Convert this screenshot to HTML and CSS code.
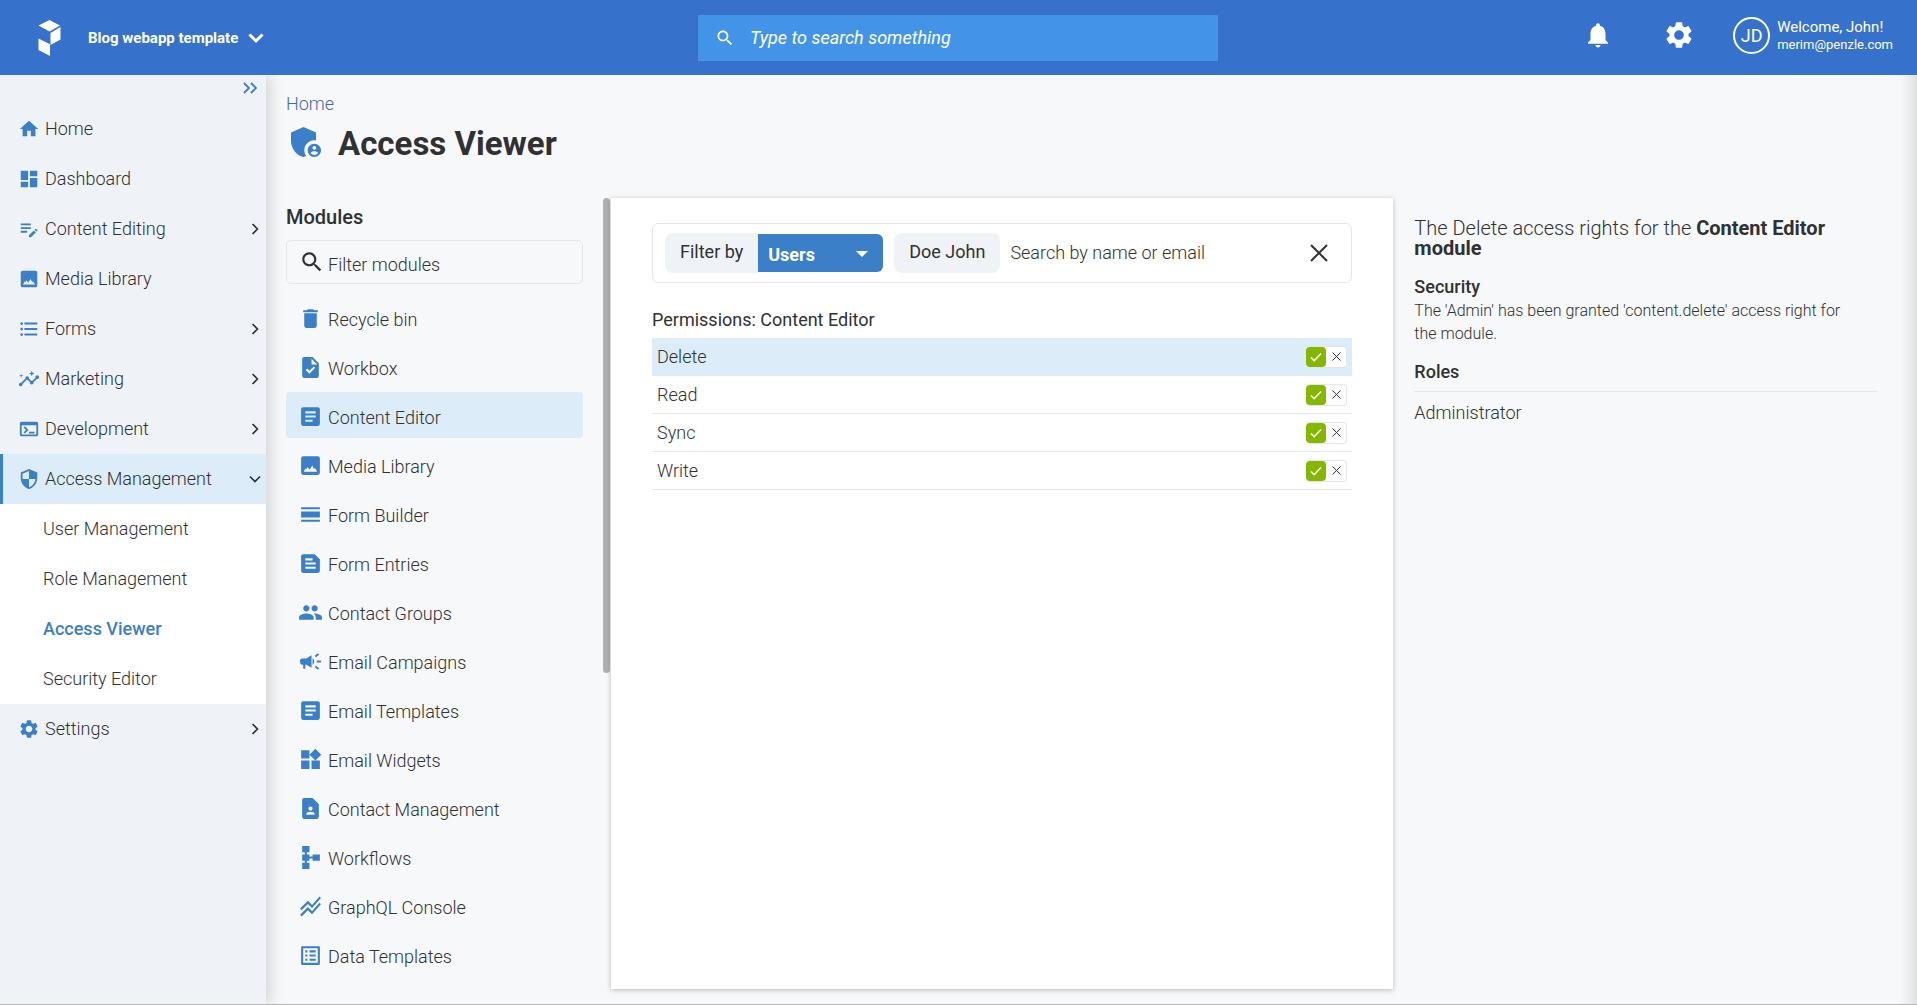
FILE: index.html
```html
<!DOCTYPE html>
<html lang="en">
<head>
    <meta charset="UTF-8">
    <meta name="viewport" content="width=device-width, initial-scale=1">
    <title>Access Viewer</title>
    <link rel="stylesheet" href="styles.css">
</head>
<body>

    <!-- icons -->
    <svg class="sprite" aria-hidden="true">
        <symbol id="i-home" viewBox="0 0 24 24"><path d="M10 20v-6h4v6h5v-8h3L12 3 2 12h3v8z"/></symbol>
        <symbol id="i-dashboard" viewBox="0 0 24 24"><path d="M3 13h8V3H3v10zm0 8h8v-6H3v6zm10 0h8V11h-8v10zm0-18v6h8V3h-8z"/></symbol>
        <symbol id="i-edit" viewBox="0 0 24 24"><path d="M3 10h11v2H3v-2zm0-2h11V6H3v2zm0 8h7v-2H3v2zm15.01-3.13l.71-.71c.39-.39 1.02-.39 1.41 0l.71.71c.39.39.39 1.02 0 1.41l-.71.71-2.12-2.12zm-.71.71l-5.3 5.3V21h2.12l5.3-5.3-2.12-2.12z"/></symbol>
        <symbol id="i-image" viewBox="0 0 24 24"><path fill-rule="evenodd" d="M5 3h14a2 2 0 0 1 2 2v14a2 2 0 0 1-2 2H5a2 2 0 0 1-2-2V5a2 2 0 0 1 2-2zM5.5 18h13l-2.2-3.6-1 1-1.6-3.4-2.6 4-1.8-2.6-1.2 2-1-.6z"/></symbol>
        <symbol id="i-list" viewBox="0 0 24 24"><path d="M4 10.5c-.83 0-1.5.67-1.5 1.5s.67 1.5 1.5 1.5 1.5-.67 1.5-1.5-.67-1.5-1.5-1.5zm0-6c-.83 0-1.5.67-1.5 1.5S3.17 7.5 4 7.5 5.5 6.83 5.5 6 4.83 4.5 4 4.5zm0 12c-.83 0-1.5.68-1.5 1.5s.68 1.5 1.5 1.5 1.5-.68 1.5-1.5-.67-1.5-1.5-1.5zM7 19h14v-2H7v2zm0-6h14v-2H7v2zm0-8v2h14V5H7z"/></symbol>
        <symbol id="i-insights" viewBox="0 0 24 24"><path d="M21 8c-1.45 0-2.26 1.44-1.93 2.51l-3.55 3.56c-.3-.09-.74-.09-1.04 0l-2.55-2.55C12.27 10.45 11.46 9 10 9c-1.45 0-2.27 1.44-1.93 2.52l-4.56 4.55C2.44 15.74 1 16.55 1 18c0 1.1.9 2 2 2 1.45 0 2.26-1.44 1.93-2.51l4.55-4.56c.3.09.74.09 1.04 0l2.55 2.55C12.73 16.55 13.54 18 15 18c1.45 0 2.27-1.44 1.93-2.52l3.56-3.55C21.56 12.26 23 11.45 23 10c0-1.1-.9-2-2-2z"/><path d="M15 9l.94-2.07L18 6l-2.06-.93L15 3l-.92 2.07L12 6l2.08.93zM3.5 11L4 9l2-.5L4 8l-.5-2L3 8l-2 .5L3 9z"/></symbol>
        <symbol id="i-terminal" viewBox="0 0 24 24"><path d="M20 4H4c-1.11 0-2 .9-2 2v12c0 1.1.89 2 2 2h16c1.1 0 2-.9 2-2V6c0-1.1-.89-2-2-2zm0 14H4V8h16v10zm-2-1h-6v-2h6v2zM7.5 17l-1.41-1.41L8.67 13l-2.59-2.59L7.5 9l4 4-4 4z"/></symbol>
        <symbol id="i-shield" viewBox="0 0 24 24"><path d="M12 1L3 5v6c0 5.55 3.84 10.74 9 12 5.16-1.26 9-6.45 9-12V5l-9-4zm0 10.99h7c-.53 4.12-3.28 7.79-7 8.94V12H5V6.3l7-3.11v8.8z"/></symbol>
        <symbol id="i-settings" viewBox="0 0 24 24"><path d="M19.14 12.94c.04-.3.06-.61.06-.94 0-.32-.02-.64-.07-.94l2.03-1.58c.18-.14.23-.41.12-.61l-1.92-3.32c-.12-.22-.37-.29-.59-.22l-2.39.96c-.5-.38-1.03-.7-1.62-.94l-.36-2.54c-.04-.24-.24-.41-.48-.41h-3.84c-.24 0-.43.17-.47.41l-.36 2.54c-.59.24-1.13.57-1.62.94l-2.39-.96c-.22-.08-.47 0-.59.22L2.74 8.87c-.12.21-.08.47.12.61l2.03 1.58c-.05.3-.09.63-.09.94s.02.64.07.94l-2.03 1.58c-.18.14-.23.41-.12.61l1.92 3.32c.12.22.37.29.59.22l2.39-.96c.5.38 1.03.7 1.62.94l.36 2.54c.05.24.24.41.48.41h3.84c.24 0 .44-.17.47-.41l.36-2.54c.59-.24 1.13-.56 1.62-.94l2.39.96c.22.08.47 0 .59-.22l1.92-3.32c.12-.22.07-.47-.12-.61l-2.01-1.58zM12 15.6c-1.98 0-3.6-1.62-3.6-3.6s1.62-3.6 3.6-3.6 3.6 1.62 3.6 3.6-1.62 3.6-3.6 3.6z"/></symbol>
        <symbol id="i-bell" viewBox="0 0 24 24"><path d="M12 22c1.1 0 2-.9 2-2h-4c0 1.1.89 2 2 2zm6-6v-5c0-3.07-1.64-5.64-4.5-6.32V4c0-.83-.67-1.5-1.5-1.5s-1.5.67-1.5 1.5v.68C7.63 5.36 6 7.92 6 11v5l-2 2v1h16v-1l-2-2z"/></symbol>
        <symbol id="i-admin" viewBox="0 0 24 24"><path d="M17 11c.34 0 .67.04 1 .09V6.27L10.5 3 3 6.27v4.91c0 4.54 3.2 8.79 7.5 9.82.55-.13 1.08-.32 1.6-.55-.69-.98-1.1-2.17-1.1-3.45 0-3.31 2.69-6 6-6z"/><path d="M17 13c-2.21 0-4 1.79-4 4s1.79 4 4 4 4-1.79 4-4-1.79-4-4-4zm0 1.38c.62 0 1.12.51 1.12 1.12s-.51 1.12-1.12 1.12-1.12-.51-1.12-1.12.5-1.12 1.12-1.12zm0 5.37c-.93 0-1.74-.46-2.24-1.17.05-.72 1.51-1.08 2.24-1.08s2.19.36 2.24 1.08c-.5.71-1.31 1.17-2.24 1.17z"/></symbol>
        <symbol id="i-search" viewBox="0 0 24 24"><path d="M15.5 14h-.79l-.28-.27C15.41 12.59 16 11.11 16 9.5 16 5.91 13.09 3 9.5 3S3 5.91 3 9.5 5.91 16 9.5 16c1.61 0 3.09-.59 4.23-1.57l.27.28v.79l5 4.99L20.49 19l-4.99-5zm-6 0C7.01 14 5 11.99 5 9.5S7.01 5 9.5 5 14 7.01 14 9.5 11.99 14 9.5 14z"/></symbol>
        <symbol id="i-trash" viewBox="0 0 24 24"><path d="M6 19c0 1.1.9 2 2 2h8c1.1 0 2-.9 2-2V7H6v12zM19 4h-3.5l-1-1h-5l-1 1H5v2h14V4z"/></symbol>
        <symbol id="i-task" viewBox="0 0 24 24"><path d="M14 2H6c-1.1 0-1.99.9-1.99 2L4 20c0 1.1.89 2 1.99 2H18c1.1 0 2-.9 2-2V8l-6-6zm-3.06 16L7.4 14.46l1.41-1.41 2.12 2.12 4.24-4.24 1.41 1.41L10.94 18zM13 9V3.5L18.5 9H13z"/></symbol>
        <symbol id="i-article" viewBox="0 0 24 24"><path d="M19 3H5c-1.1 0-2 .9-2 2v14c0 1.1.9 2 2 2h14c1.1 0 2-.9 2-2V5c0-1.1-.9-2-2-2zm-5 14H7v-2h7v2zm3-4H7v-2h10v2zm0-4H7V7h10v2z"/></symbol>
        <symbol id="i-rows" viewBox="0 0 24 24"><path d="M3 5h18v2H3zM3 9h18v6H3zM3 17h18v2H3z"/></symbol>
        <symbol id="i-note" viewBox="0 0 24 24"><path d="M16 3H5c-1.1 0-2 .9-2 2v14c0 1.1.9 2 2 2h14c1.1 0 2-.9 2-2V8l-5-5zM7 7h7v2H7V7zm10 10H7v-2h10v2zm0-4H7v-2h10v2z"/></symbol>
        <symbol id="i-people" viewBox="0 0 24 24"><path d="M16 11c1.66 0 2.99-1.34 2.99-3S17.66 5 16 5c-1.66 0-3 1.34-3 3s1.34 3 3 3zm-8 0c1.66 0 2.99-1.34 2.99-3S9.66 5 8 5C6.34 5 5 6.34 5 8s1.34 3 3 3zm0 2c-2.33 0-7 1.17-7 3.5V19h14v-2.5c0-2.33-4.67-3.5-7-3.5zm8 0c-.29 0-.62.02-.97.05 1.16.84 1.97 1.97 1.97 3.45V19h6v-2.5c0-2.33-4.67-3.5-7-3.5z"/></symbol>
        <symbol id="i-campaign" viewBox="0 0 24 24"><path d="M18 11v2h4v-2h-4zm-2 6.61c.96.71 2.21 1.65 3.2 2.39.4-.53.8-1.07 1.2-1.6-.99-.74-2.24-1.68-3.2-2.4-.4.54-.8 1.08-1.2 1.61zM20.4 5.6c-.4-.53-.8-1.07-1.2-1.6-.99.74-2.24 1.68-3.2 2.4.4.53.8 1.07 1.2 1.6.96-.72 2.21-1.65 3.2-2.4zM4 9c-1.1 0-2 .9-2 2v2c0 1.1.9 2 2 2h1v4h2v-4h1l5 3V6L8 9H4zm11.5 3c0-1.33-.58-2.53-1.5-3.35v6.69c.92-.81 1.5-2.01 1.5-3.34z"/></symbol>
        <symbol id="i-widgets" viewBox="0 0 24 24"><path d="M13 13v8h8v-8h-8zM3 21h8v-8H3v8zM3 3v8h8V3H3zm13.66-1.31L11 7.34 16.66 13l5.66-5.66-5.66-5.65z"/></symbol>
        <symbol id="i-contact" viewBox="0 0 24 24"><path d="M14 2H6c-1.1 0-2 .9-2 2v16c0 1.1.9 2 2 2h12c1.1 0 2-.9 2-2V8l-6-6zm-2 8c1.1 0 2 .9 2 2s-.9 2-2 2-2-.9-2-2 .9-2 2-2zm4 8H8v-.57c0-.81.48-1.53 1.22-1.85.85-.37 1.79-.58 2.78-.58.99 0 1.93.21 2.78.58.74.32 1.22 1.04 1.22 1.85V18z"/></symbol>
        <symbol id="i-schema" viewBox="0 0 24 24"><path d="M14 9v2h-3V9H8.5V7H11V1H4v6h2.5v2H4v6h2.5v2H4v6h7v-6H8.5v-2H11v-2h3v2h7V9h-7z"/></symbol>
        <symbol id="i-chart" viewBox="0 0 24 24"><path d="M2 19.99l7.5-7.51 4 4 7.09-7.97L22 9.92l-8.5 9.56-4-4-6 6.01-1.5-1.5zm1.5-4.5l6-6.01 4 4L22 3.92l-1.41-1.41-7.09 7.97-4-4L2 13.99l1.5 1.5z"/></symbol>
        <symbol id="i-listalt" viewBox="0 0 24 24"><path d="M19 5v14H5V5h14m1.1-2H3.9c-.5 0-.9.4-.9.9v16.2c0 .4.4.9.9.9h16.2c.4 0 .9-.5.9-.9V3.9c0-.5-.5-.9-.9-.9zM11 7h6v2h-6V7zm0 4h6v2h-6v-2zm0 4h6v2h-6zM7 7h2v2H7zm0 4h2v2H7zm0 4h2v2H7z"/></symbol>
        <symbol id="i-right" viewBox="0 0 12 12"><path class="line" stroke-width="1.6" d="M3.5 1l5 5-5 5"/></symbol>
        <symbol id="i-down" viewBox="0 0 12 12"><path class="line" stroke-width="1.6" d="M1 3.500l5 5 5-5"/></symbol>
        <symbol id="i-double" viewBox="0 0 16 12"><path class="line" stroke-width="1.8" d="M2 1l5 5-5 5M9 1l5 5-5 5"/></symbol>
        <symbol id="i-close" viewBox="0 0 18 18"><path class="line" d="M1 1l16 16M17 1L1 17"/></symbol>
        <symbol id="i-check" viewBox="0 0 12 12"><path class="line" stroke-width="1.6" d="M1 6.500l3.200 3.200L11 2.500"/></symbol>
    </svg>

    <header class="header">
        <div class="header-left">
            <a class="logo" href="#" aria-label="Start page">
                <svg viewBox="0 0 22 36"><path d="M0 5.5L11 0l10.500 5.500L11 11.500zM12 13l10-6v12.500l-10 5.500zM0 18.500l11.500 5.800V36L0 30z"/></svg>
            </a>
            <button class="project" type="button">Blog webapp template
                <svg viewBox="0 0 16 12"><path class="line" stroke-width="3" d="M1.500 2.500L8 9l6.500-6.500"/></svg>
            </button>
        </div>
        <form class="search">
            <svg><use href="#i-search"/></svg>
            <input type="text" placeholder="Type to search something" aria-label="Search">
        </form>
        <div class="header-right">
            <button class="bell" type="button" aria-label="Notifications"><svg><use href="#i-bell"/></svg></button>
            <button class="cog" type="button" aria-label="Settings"><svg><use href="#i-settings"/></svg></button>
            <a class="user" href="#">
                <span class="avatar">JD</span>
                <span class="user-text">
                    <span class="user-name">Welcome, John!</span>
                    <span class="user-mail">merim@penzle.com</span>
                </span>
            </a>
        </div>
    </header>

    <div class="page">
        <nav class="sidebar">
            <button class="collapse" type="button" aria-label="Collapse menu"><svg><use href="#i-double"/></svg></button>
            <ul class="menu">
                <li><a href="#"><svg class="icon"><use href="#i-home"/></svg>Home</a></li>
                <li><a href="#"><svg class="icon"><use href="#i-dashboard"/></svg>Dashboard</a></li>
                <li><a href="#"><svg class="icon"><use href="#i-edit"/></svg>Content Editing<svg class="arrow"><use href="#i-right"/></svg></a></li>
                <li><a href="#"><svg class="icon"><use href="#i-image"/></svg>Media Library</a></li>
                <li><a href="#"><svg class="icon"><use href="#i-list"/></svg>Forms<svg class="arrow"><use href="#i-right"/></svg></a></li>
                <li><a href="#"><svg class="icon"><use href="#i-insights"/></svg>Marketing<svg class="arrow"><use href="#i-right"/></svg></a></li>
                <li><a href="#"><svg class="icon"><use href="#i-terminal"/></svg>Development<svg class="arrow"><use href="#i-right"/></svg></a></li>
                <li>
                    <a class="open" href="#"><svg class="icon"><use href="#i-shield"/></svg>Access Management<svg class="arrow"><use href="#i-down"/></svg></a>
                    <ul class="submenu">
                        <li><a href="#">User Management</a></li>
                        <li><a href="#">Role Management</a></li>
                        <li><a class="current" href="#">Access Viewer</a></li>
                        <li><a href="#">Security Editor</a></li>
                    </ul>
                </li>
                <li><a href="#"><svg class="icon"><use href="#i-settings"/></svg>Settings<svg class="arrow"><use href="#i-right"/></svg></a></li>
            </ul>
        </nav>

        <main class="main">
            <a class="breadcrumb" href="#">Home</a>
            <h1 class="title"><svg><use href="#i-admin"/></svg>Access Viewer</h1>

            <div class="columns">
                <section class="modules">
                    <h2>Modules</h2>
                    <label class="module-filter">
                        <svg><use href="#i-search"/></svg>
                        <input type="text" placeholder="Filter modules" aria-label="Filter modules">
                    </label>
                    <ul class="module-list">
                        <li><a href="#"><svg><use href="#i-trash"/></svg>Recycle bin</a></li>
                        <li><a href="#"><svg><use href="#i-task"/></svg>Workbox</a></li>
                        <li><a class="selected" href="#"><svg><use href="#i-article"/></svg>Content Editor</a></li>
                        <li><a href="#"><svg><use href="#i-image"/></svg>Media Library</a></li>
                        <li><a href="#"><svg><use href="#i-rows"/></svg>Form Builder</a></li>
                        <li><a href="#"><svg><use href="#i-note"/></svg>Form Entries</a></li>
                        <li><a href="#"><svg><use href="#i-people"/></svg>Contact Groups</a></li>
                        <li><a href="#"><svg><use href="#i-campaign"/></svg>Email Campaigns</a></li>
                        <li><a href="#"><svg><use href="#i-article"/></svg>Email Templates</a></li>
                        <li><a href="#"><svg><use href="#i-widgets"/></svg>Email Widgets</a></li>
                        <li><a href="#"><svg><use href="#i-contact"/></svg>Contact Management</a></li>
                        <li><a href="#"><svg><use href="#i-schema"/></svg>Workflows</a></li>
                        <li><a href="#"><svg><use href="#i-chart"/></svg>GraphQL Console</a></li>
                        <li><a href="#"><svg><use href="#i-listalt"/></svg>Data Templates</a></li>
                    </ul>
                </section>
                <div class="scrollbar"><div class="thumb"></div></div>

                <section class="panel">
                    <form class="filter">
                        <label class="filter-label" for="filter-type">Filter by</label>
                        <span class="filter-select">
                            <select id="filter-type">
                                <option>Users</option>
                                <option>Roles</option>
                            </select>
                            <svg viewBox="0 0 12 6"><path d="M0 0h12L6 6z"/></svg>
                        </span>
                        <span class="chip">Doe John</span>
                        <input type="text" placeholder="Search by name or email" aria-label="Search by name or email">
                        <button class="clear" type="button" aria-label="Clear"><svg><use href="#i-close"/></svg></button>
                    </form>

                    <table class="permissions">
                        <caption>Permissions: Content Editor</caption>
                        <tbody>
                            <tr class="selected">
                                <td>Delete</td>
                                <td><div class="toggle"><button class="allow" type="button" aria-label="Allow delete"><svg><use href="#i-check"/></svg></button><button class="deny" type="button" aria-label="Deny delete"><svg><use href="#i-close"/></svg></button></div></td>
                            </tr>
                            <tr>
                                <td>Read</td>
                                <td><div class="toggle"><button class="allow" type="button" aria-label="Allow read"><svg><use href="#i-check"/></svg></button><button class="deny" type="button" aria-label="Deny read"><svg><use href="#i-close"/></svg></button></div></td>
                            </tr>
                            <tr>
                                <td>Sync</td>
                                <td><div class="toggle"><button class="allow" type="button" aria-label="Allow sync"><svg><use href="#i-check"/></svg></button><button class="deny" type="button" aria-label="Deny sync"><svg><use href="#i-close"/></svg></button></div></td>
                            </tr>
                            <tr>
                                <td>Write</td>
                                <td><div class="toggle"><button class="allow" type="button" aria-label="Allow write"><svg><use href="#i-check"/></svg></button><button class="deny" type="button" aria-label="Deny write"><svg><use href="#i-close"/></svg></button></div></td>
                            </tr>
                        </tbody>
                    </table>
                </section>

                <aside class="details">
                    <h2>The Delete access rights for the <b>Content Editor module</b></h2>
                    <h3>Security</h3>
                    <p>The 'Admin' has been granted 'content.delete' access right for the module.</p>
                    <h3 class="roles">Roles</h3>
                    <div class="role">Administrator</div>
                </aside>
            </div>
        </main>
    </div>

</body>
</html>
```

FILE: styles.css
```css
* {
    box-sizing: border-box;
    margin: 0;
    padding: 0;
}
body {
    display: flex;
    flex-direction: column;
    min-height: 100vh;
    font-family: Roboto, "Liberation Sans", sans-serif;
    font-size: 18px;
    font-weight: 300;
    line-height: 24px;
    color: #2f3133;
    background-color: #f7f8fa;
}
ul {
    list-style: none;
}
a {
    color: inherit;
    text-decoration: none;
}
button, input, select {
    font: inherit;
    color: inherit;
    border: none;
    outline: none;
    background: none;
}
button {
    cursor: pointer;
}
svg {
    display: block;
    flex: none;
    fill: currentColor;
}
.line {
    fill: none;
    stroke: currentColor;
}
.sprite {
    position: absolute;
    width: 0;
    height: 0;
}

/* header */
.header {
    display: grid;
    grid-template-columns: 698fr 520fr 699fr;
    align-items: center;
    height: 75px;
    color: #fff;
    background-color: #3672cb;
}
.header-left {
    display: flex;
    align-items: center;
    gap: 27px;
    padding-left: 38px;
}
.logo svg {
    width: 23px;
    height: 36px;
}
.project {
    display: flex;
    align-items: center;
    gap: 10px;
    font-size: 15px;
    font-weight: 700;
}
.project svg {
    width: 16px;
    height: 12px;
}
.search {
    display: flex;
    align-items: center;
    gap: 15px;
    height: 46px;
    padding: 0 17px;
    background-color: #4394e8;
}
.search svg {
    width: 20px;
    height: 20px;
}
.search input {
    flex: 1;
    min-width: 0;
    font-style: italic;
    font-weight: 400;
}
input::placeholder {
    color: inherit;
    opacity: 1;
}
.header-right {
    display: flex;
    align-items: center;
    justify-content: flex-end;
    padding: 0 24px 5px 0;
}
.bell svg {
    width: 30px;
    height: 30px;
}
.cog {
    margin: 0 38px 0 50px;
}
.cog svg {
    width: 32px;
    height: 32px;
}
.user {
    display: flex;
    align-items: center;
    gap: 7px;
    font-weight: 400;
}
.avatar {
    width: 37px;
    height: 37px;
    line-height: 33px;
    text-align: center;
    border: 2px solid #fff;
    border-radius: 50%;
}
.user-text {
    display: flex;
    flex-direction: column;
    padding-top: 2px;
    line-height: 18px;
}
.user-name {
    font-size: 15px;
}
.user-mail {
    font-size: 13px;
}

/* sidebar */
.page {
    display: flex;
    flex: 1;
    border-bottom: 1px solid #b4b6b9;
    box-shadow: inset -22px 0 18px -18px rgba(0, 0, 0, 0.15);
}
.sidebar {
    flex: none;
    width: 266px;
    background-color: #eff3f8;
    box-shadow: 4px 0 14px rgba(0, 0, 0, 0.15);
    clip-path: inset(0 -24px 0 0);
}
.collapse {
    display: block;
    margin: 7px 8px 10px auto;
    color: #3a7fc8;
}
.collapse svg {
    width: 16px;
    height: 12px;
}
.menu a {
    display: flex;
    align-items: center;
    height: 50px;
    padding: 0 5px 0 18px;
}
.menu .icon {
    width: 22px;
    height: 22px;
    margin-right: 5px;
    color: #3a7fc8;
}
.arrow {
    width: 12px;
    height: 12px;
    margin-left: auto;
}
.menu .open {
    padding-left: 15px;
    border-left: 3px solid #3a7fc8;
    background-color: #dcedf9;
}
.submenu {
    background-color: #fff;
}
.menu .submenu a {
    padding-left: 43px;
}
.submenu .current {
    font-weight: 500;
    color: #3a7fc8;
}

/* content */
.main {
    display: flex;
    flex: 1;
    flex-direction: column;
    min-width: 0;
    padding: 17px 40px 15px 20px;
}
.breadcrumb {
    color: #3e68b5;
}
.title {
    display: flex;
    align-items: center;
    gap: 12px;
    height: 56px;
    font-size: 33px;
    font-weight: 700;
}
.title svg {
    width: 40px;
    height: 40px;
    margin-bottom: 5px;
    color: #3a7fc8;
}
.columns {
    display: flex;
    flex: 1;
    padding-top: 26px;
}
.modules {
    flex: none;
    width: 297px;
    margin-right: 20px;
}
.modules h2 {
    margin: 7px 0 11px;
    font-size: 20px;
    font-weight: 500;
}
.module-filter {
    display: flex;
    align-items: center;
    gap: 3px;
    height: 44px;
    padding-left: 12px;
    border: 1px solid #e4e6e9;
    border-radius: 5px;
}
.module-filter svg {
    width: 26px;
    height: 26px;
}
.module-filter input {
    flex: 1;
    min-width: 0;
    padding-top: 6px;
}
.module-list {
    display: flex;
    flex-direction: column;
    gap: 3px;
    padding-top: 10px;
}
.module-list a {
    display: flex;
    align-items: center;
    gap: 5px;
    height: 46px;
    padding: 6px 12px 0;
    border-radius: 4px;
}
.module-list svg {
    width: 25px;
    height: 25px;
    margin-bottom: 4px;
    color: #3a7fc8;
}
.module-list .selected {
    background-color: #dcedf9;
}
.scrollbar {
    flex: none;
    width: 7px;
    margin-right: 1px;
}
.thumb {
    height: 60%;
    border-radius: 4px;
    background-color: #b0b0b0;
}
.panel {
    flex: 1;
    min-width: 0;
    padding: 25px 41px;
    background-color: #fff;
    box-shadow: 0 1px 5px rgba(0, 0, 0, 0.25);
}
.filter {
    display: flex;
    align-items: center;
    height: 60px;
    padding: 0 20px 0 12px;
    border: 1px solid #e4e6e9;
    border-radius: 6px;
}
.filter-label, .chip {
    height: 40px;
    line-height: 37px;
    font-weight: 400;
    white-space: nowrap;
    background-color: #eff3f8;
}
.filter-label {
    padding: 0 15px;
    border-radius: 8px 0 0 8px;
}
.filter-select {
    position: relative;
    width: 125px;
    height: 38px;
}
.filter-select select {
    width: 100%;
    height: 100%;
    padding: 3px 10px 0;
    font-weight: 700;
    color: #fff;
    border-radius: 0 6px 6px 0;
    background-color: #3a7fc8;
    appearance: none;
}
.filter-select svg {
    position: absolute;
    top: 17px;
    right: 15px;
    width: 12px;
    height: 6px;
    color: #fff;
    pointer-events: none;
}
.chip {
    margin: 0 10px 0 11px;
    padding: 0 15px;
    border-radius: 8px;
}
.filter input {
    flex: 1;
    min-width: 0;
}
.clear svg {
    width: 24px;
    height: 18px;
    stroke-width: 2px;
}
.permissions {
    width: 100%;
    margin-top: 25px;
    border-spacing: 0;
}
.permissions caption {
    padding-bottom: 6px;
    font-weight: 400;
    text-align: left;
}
.permissions td {
    height: 38px;
    padding: 0 5px;
    border-bottom: 1px solid #e4e6e9;
}
.permissions .selected td {
    border-color: #dcedf9;
    background-color: #dcedf9;
}
.toggle {
    display: flex;
    width: 41px;
    margin-left: auto;
    border: 1px solid #e4e6e9;
    border-left: none;
    border-radius: 4px;
    background-color: #fff;
}
.allow, .deny {
    display: flex;
    align-items: center;
    justify-content: center;
    width: 20px;
    height: 20px;
}
.allow {
    color: #fff;
    border-radius: 4px;
    background-color: #84b800;
}
.allow svg {
    width: 12px;
    height: 12px;
}
.deny svg {
    width: 9px;
    height: 9px;
    stroke-width: 2px;
}

/* details */
.details {
    flex: none;
    width: 30.4%;
    padding: 20px 0 0 21px;
}
.details h2 {
    margin-bottom: 17px;
    font-size: 20px;
    font-weight: 300;
    line-height: 20px;
}
.details b {
    font-weight: 700;
}
.details h3 {
    font-size: 18px;
    font-weight: 500;
}
.details p {
    padding-right: 20px;
    font-size: 16px;
    line-height: 23px;
}
.details .roles {
    margin-top: 15px;
    padding-bottom: 7px;
    border-bottom: 1px solid #e4e6e9;
}
.role {
    padding-top: 9px;
}
```
